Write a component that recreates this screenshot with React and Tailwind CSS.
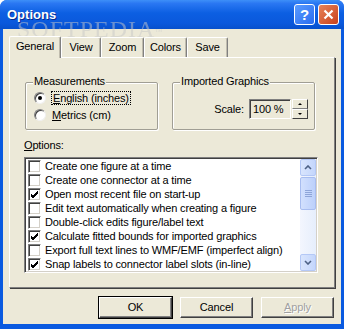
import React from 'react';

const ROWS = [
  { label: 'Create one figure at a time', on: false },
  { label: 'Create one connector at a time', on: false },
  { label: 'Open most recent file on start-up', on: true },
  { label: 'Edit text automatically when creating a figure', on: false },
  { label: 'Double-click edits figure/label text', on: false },
  { label: 'Calculate fitted bounds for imported graphics', on: true },
  { label: 'Export full text lines to WMF/EMF (imperfect align)', on: false },
  { label: 'Snap labels to connector label slots (in-line)', on: true },
];

const TABS = [
  { name: 'General', w: 'w-[52px]', active: true },
  { name: 'View', w: 'w-[40px]' },
  { name: 'Zoom', w: 'w-[43px]' },
  { name: 'Colors', w: 'w-[43px]' },
  { name: 'Save', w: 'w-[41px]' },
];

const Check = ({ on }) => (
  <div className="w-[13px] h-[13px] shrink-0 bg-white border border-t-[#808080] border-l-[#808080] border-r-white border-b-white shadow-[inset_1px_1px_0_#404040,inset_-1px_-1px_0_#d4d0c8] flex items-center justify-center">
    {on && (
      <svg width="9" height="9" viewBox="0 0 9 9">
        <path d="M1 4 L3 6 L8 1 M1 5 L3 7 L8 2 M1 6 L3 8 L8 3" stroke="#000" strokeWidth="1" fill="none" />
      </svg>
    )}
  </div>
);

const Radio = ({ on }) => (
  <div className="w-[12px] h-[12px] shrink-0 rounded-full bg-white border border-t-[#808080] border-l-[#808080] border-r-[#f0f0f0] border-b-[#f0f0f0] shadow-[inset_1px_1px_0_#404040] flex items-center justify-center">
    {on && <div className="w-[4px] h-[4px] rounded-full bg-black" />}
  </div>
);

const Btn = ({ children, def, disabled }) => (
  <div className={`w-[75px] h-[23px] flex items-center justify-center bg-[#ece9d8] border ${def ? 'border-black' : 'border-transparent'}`}>
    <div className={`w-full h-full flex items-center justify-center border border-t-white border-l-white border-r-[#404040] border-b-[#404040] shadow-[inset_-1px_-1px_0_#808080] ${disabled ? 'text-[#a0a0a0] [text-shadow:1px_1px_0_#fff]' : 'text-black'}`}>
      {children}
    </div>
  </div>
);

const GroupBox = ({ title, w, children }) => (
  <div className={`relative ${w} h-[48px] border border-[#a09e94] rounded-[2px] shadow-[1px_1px_0_#fff,inset_1px_1px_0_#fff]`}>
    <span className="absolute -top-[8px] left-[7px] bg-[#ece9d8] px-[1px] leading-[13px]">{title}</span>
    {children}
  </div>
);

const ScrollBtn = ({ down }) => (
  <div className="w-[16px] h-[17px] rounded-[2px] border border-[#b4c8f6] bg-[linear-gradient(90deg,#d9e5fd,#c4d6fc)] flex items-center justify-center">
    <svg width="8" height="5" viewBox="0 0 8 5">
      <path d={down ? 'M1 1 L4 4 L7 1' : 'M1 4 L4 1 L7 4'} stroke="#4d6185" strokeWidth="1.6" fill="none" />
    </svg>
  </div>
);

export default function App() {
  return (
    <div className="relative w-[344px] h-[329px] overflow-hidden bg-[#0a5ae0] rounded-t-[7px] text-[11px] leading-[13px] tracking-[-0.15px] text-black font-['Liberation_Sans',Arial,sans-serif] flex flex-col">
      {/* title bar */}
      <div className="h-[29px] shrink-0 flex items-center pl-[7px] pr-[5px] bg-[linear-gradient(180deg,#3d8ff8_0%,#2a77f2_12%,#0c5fe2_45%,#0a58dc_80%,#0750cc_100%)]">
        <span className="text-white font-bold text-[13px] tracking-normal [text-shadow:1px_1px_0_#0a2a8a] -mt-[1px]">Options</span>
        <div className="ml-auto flex gap-[3px]">
          <div className="w-[21px] h-[21px] rounded-[3px] border border-white bg-[linear-gradient(135deg,#5a9cff,#2a6cf0)] flex items-center justify-center text-white font-bold text-[15px]">?</div>
          <div className="w-[21px] h-[21px] rounded-[3px] border border-white bg-[linear-gradient(135deg,#e8845a,#c8401c)] flex items-center justify-center">
            <svg width="11" height="11" viewBox="0 0 11 11">
              <path d="M1.5 1.5 L9.5 9.5 M9.5 1.5 L1.5 9.5" stroke="#fff" strokeWidth="2.2" />
            </svg>
          </div>
        </div>
      </div>

      {/* body */}
      <div className="mx-[3px] h-[295px] bg-[#ece9d8] flex flex-col px-[6px]">
        {/* tabs */}
        <div className="h-[28px] flex items-end">
          {TABS.map((t) => (
            <div
              key={t.name}
              className={`${t.w} ${t.active ? 'h-[22px] relative z-10 -mb-px pb-[3px]' : 'h-[20px]'} flex items-center justify-center bg-[#ece9d8] border-t border-l border-t-white border-l-white border-r border-r-[#808080] rounded-t-[2px] shadow-[inset_-1px_0_0_#c0bcae]`}
            >
              {t.name}
            </div>
          ))}
        </div>

        {/* panel */}
        <div className="h-[231px] border border-t-white border-l-white border-r-[#808080] border-b-[#808080] shadow-[1px_1px_0_#404040] flex flex-col">
          <div className="flex pl-[15px] pt-[24px] gap-[14px]">
            <GroupBox title="Measurements" w="w-[133px]">
              <div className="flex flex-col gap-[3px] pt-[8px] pl-[8px]">
                <div className="h-[14px] flex items-center gap-[5px]">
                  <Radio on />
                  <span className="border border-dotted border-black px-[1px] leading-[12px]"><u>E</u>nglish (inches)</span>
                </div>
                <div className="h-[14px] flex items-center gap-[6px]">
                  <Radio />
                  <span><u>M</u>etrics (cm)</span>
                </div>
              </div>
            </GroupBox>
            <GroupBox title="Imported Graphics" w="w-[143px]">
              <div className="flex items-center justify-end pr-[6px] pt-[16px]">
                <span className="mr-[5px]">Scale:</span>
                <div className="w-[42px] h-[20px] flex items-center pl-[3px] border border-t-[#808080] border-l-[#808080] border-r-white border-b-white shadow-[inset_1px_1px_0_#404040]">100 %</div>
                <div className="ml-[1px] w-[16px] h-[20px] flex flex-col">
                  <div className="h-[10px] flex items-center justify-center border border-t-white border-l-white border-r-[#404040] border-b-[#808080]">
                    <div className="w-0 h-0 border-l-[2px] border-r-[2px] border-b-[2px] border-l-transparent border-r-transparent border-b-black" />
                  </div>
                  <div className="h-[10px] flex items-center justify-center border border-t-white border-l-white border-r-[#404040] border-b-[#404040]">
                    <div className="w-0 h-0 border-l-[2px] border-r-[2px] border-t-[2px] border-l-transparent border-r-transparent border-t-black" />
                  </div>
                </div>
              </div>
            </GroupBox>
          </div>

          <div className="pl-[14px] mt-[9px]"><u>O</u>ptions:</div>

          <div className="ml-[14px] mt-[5px] w-[294px] h-[116px] flex bg-white border border-t-[#808080] border-l-[#808080] border-r-white border-b-white shadow-[inset_1px_1px_0_#404040,inset_-1px_-1px_0_#d4d0c8] p-px">
            <div className="flex-1 flex flex-col pl-[2px]">
              {ROWS.map((r) => (
                <div key={r.label} className="h-[14px] flex items-center gap-[4px] whitespace-nowrap overflow-hidden">
                  <Check on={r.on} />
                  <span>{r.label}</span>
                </div>
              ))}
            </div>
            <div className="w-[16px] flex flex-col bg-[linear-gradient(90deg,#f3f6fe,#e6eefc)]">
              <ScrollBtn />
              <div className="mt-[1px] h-[33px] rounded-[2px] border border-[#a8bdf0] bg-[linear-gradient(90deg,#d2e0fd,#bcd0fb)] flex flex-col items-center justify-center gap-[1px]">
                <div className="w-[7px] h-px bg-[#8ea5d8]" />
                <div className="w-[7px] h-px bg-[#8ea5d8]" />
                <div className="w-[7px] h-px bg-[#8ea5d8]" />
                <div className="w-[7px] h-px bg-[#8ea5d8]" />
              </div>
              <div className="flex-1" />
              <ScrollBtn down />
            </div>
          </div>
        </div>

        {/* buttons */}
        <div className="flex justify-end gap-[6px] mt-[8px]">
          <Btn def>OK</Btn>
          <Btn>Cancel</Btn>
          <Btn disabled><span><u>A</u>pply</span></Btn>
        </div>
      </div>

      {/* watermark */}
      <div className="absolute left-[17px] top-[19px] text-[24px] leading-[20px] tracking-[1px] font-['Liberation_Serif',serif] text-[#c8c8c8] opacity-50 pointer-events-none">
        SOFTPEDIA<sup className="text-[7px]">™</sup>
      </div>
    </div>
  );
}
